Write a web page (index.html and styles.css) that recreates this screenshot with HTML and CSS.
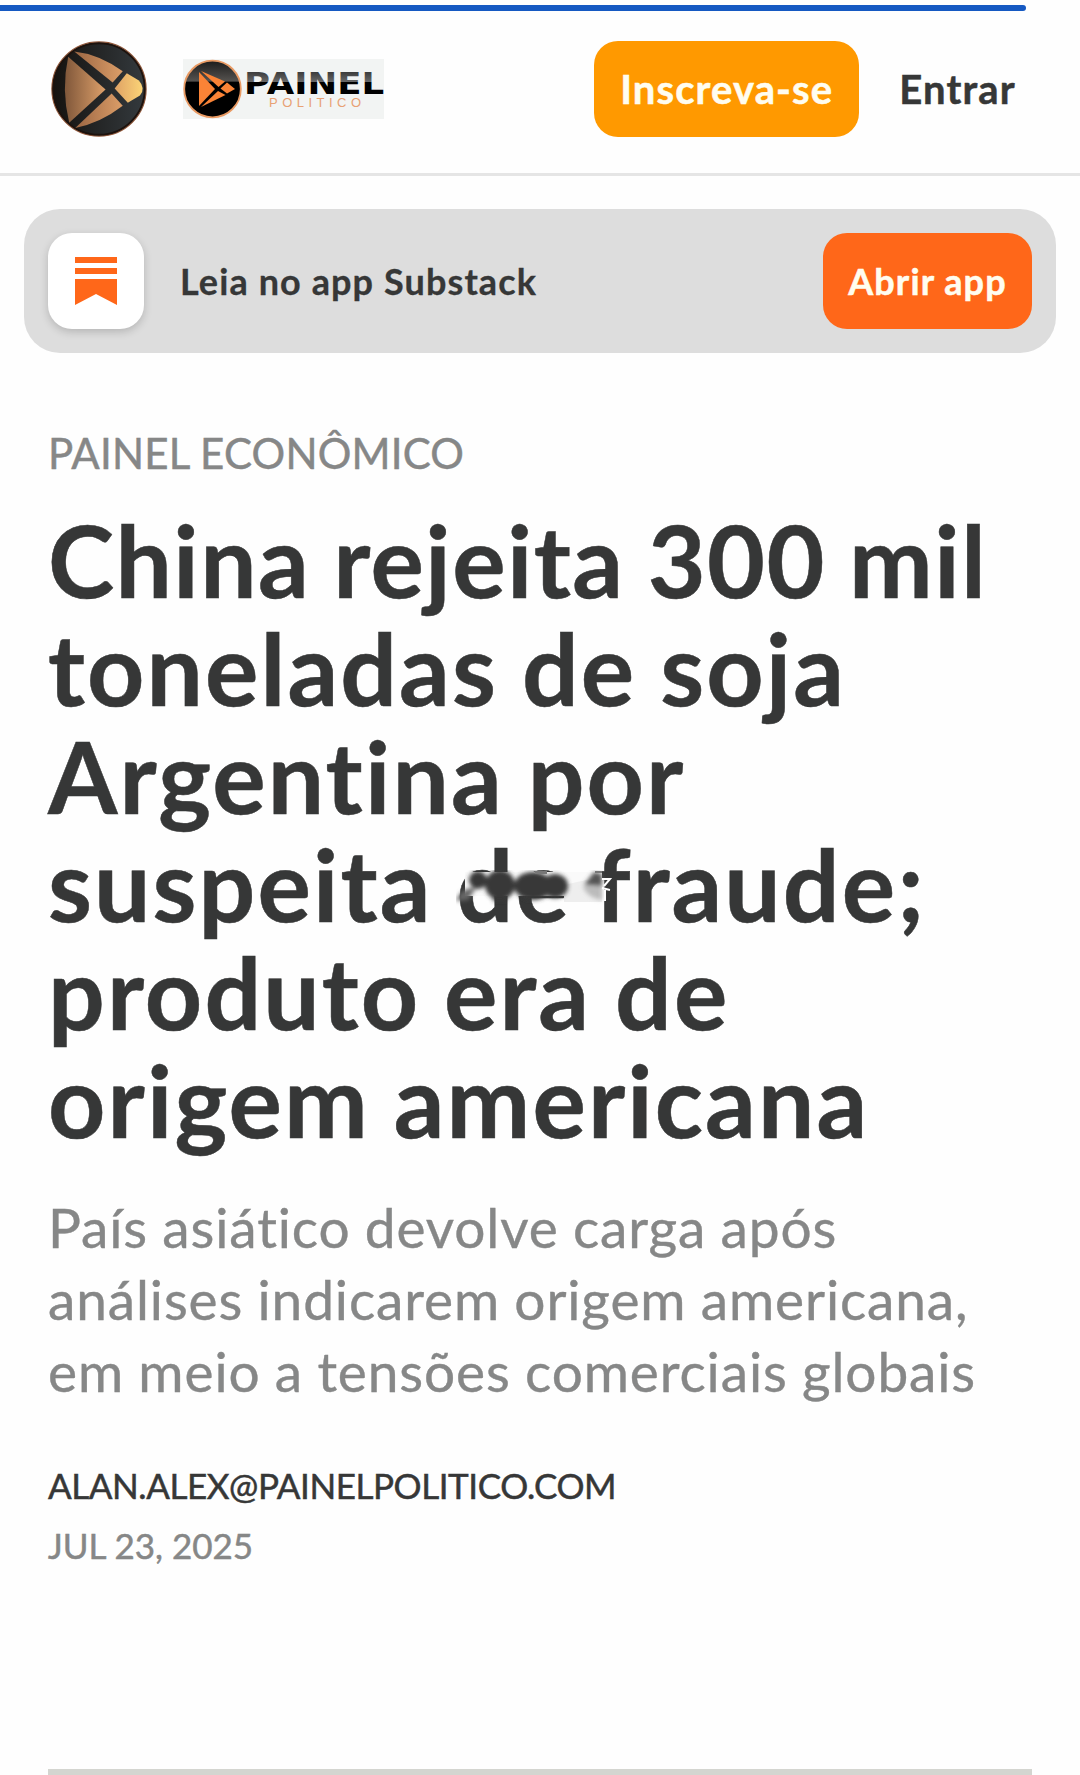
FILE: index.html
```
<!DOCTYPE html>
<html lang="pt-BR">
<head>
    <meta charset="UTF-8">
    <title>Painel Político</title>
    <link rel="stylesheet" href="styles.css">
</head>
<body>
    <div class="progress"></div>

    <header class="header">
        <svg class="avatar" viewBox="0 0 95 95">
            <defs>
                <linearGradient id="bronze" x1="0" y1="0" x2="1" y2="0">
                    <stop offset="0" stop-color="#80573a"/>
                    <stop offset="1" stop-color="#dda06a"/>
                </linearGradient>
                <linearGradient id="wedge" x1="0" y1="0" x2="1" y2="0">
                    <stop offset="0" stop-color="#9c6643"/>
                    <stop offset="1" stop-color="#dc9e68"/>
                </linearGradient>
                <linearGradient id="gold" x1="0" y1="0" x2="1" y2="0">
                    <stop offset="0" stop-color="#dfa265"/>
                    <stop offset="1" stop-color="#fbd477"/>
                </linearGradient>
                <linearGradient id="ball" x1="0" y1="0" x2="1" y2="0">
                    <stop offset="0" stop-color="#15120f"/>
                    <stop offset="1" stop-color="#343a3e"/>
                </linearGradient>
            </defs>
            <circle cx="47.5" cy="47.5" r="46.6" fill="url(#ball)" stroke="#8f573a" stroke-width="1.2"/>
            <circle cx="47.5" cy="47.5" r="45.2" fill="none" stroke="#1d120d" stroke-width="1.8"/>
            <path d="M17 15.500Q10 48 18 81L54 48Z" fill="url(#bronze)"/>
            <path d="M23 10.500Q47 13 71 30L61 41Z" fill="url(#wedge)"/>
            <path d="M60 52L71 64Q49 81 24 86Z" fill="url(#wedge)"/>
            <path d="M75 32L87 39Q94 47 88 54L76 61L63 47Z" fill="url(#gold)"/>
        </svg>

        <svg class="logo" viewBox="0 0 201 60">
            <defs>
                <linearGradient id="gloss" x1="0" y1="0" x2="0" y2="1">
                    <stop offset="0" stop-color="#1c1c1c"/>
                    <stop offset="0.36" stop-color="#55524f"/>
                    <stop offset="0.38" stop-color="#000"/>
                    <stop offset="1" stop-color="#000"/>
                </linearGradient>
                <linearGradient id="word" gradientUnits="userSpaceOnUse" x1="0" y1="11" x2="0" y2="35">
                    <stop offset="0" stop-color="#333"/>
                    <stop offset="0.48" stop-color="#666"/>
                    <stop offset="0.5" stop-color="#000"/>
                    <stop offset="1" stop-color="#000"/>
                </linearGradient>
            </defs>
            <rect width="201" height="60" fill="#f2f4f3"/>
            <circle cx="29.500" cy="30" r="28.300" fill="url(#gloss)" stroke="#e99a63" stroke-width="1.800"/>
            <g fill="#fa8336">
                <path d="M16 13V47L32 30Z"/>
                <path d="M18 12L42 22.500L35.500 28Z"/>
                <path d="M44 23.500L52 30L44 34.500L37.500 29.500Z"/>
                <path d="M35 32L42.500 36L18 48Z"/>
            </g>
            <text class="logo-name" x="61" y="34.500" textLength="140" lengthAdjust="spacingAndGlyphs" fill="url(#word)">PAINEL</text>
            <text class="logo-sub" x="86" y="48" textLength="92">POLITICO</text>
        </svg>

        <button class="subscribe">Inscreva-se</button>
        <a class="signin">Entrar</a>
    </header>

    <div class="banner">
        <div class="app-icon">
            <svg viewBox="0 0 42 48" width="42" height="48">
                <path d="M0 0H42V6H0ZM0 11H42V17H0ZM0 22H42V48L21 37L0 48Z" fill="#ff6719"/>
            </svg>
        </div>
        <span class="banner-text">Leia no app Substack</span>
        <button class="open-app">Abrir app</button>
    </div>

    <main class="post">
        <div class="section">PAINEL ECONÔMICO</div>
        <h1 class="title">
            <span class="line line-tight">China rejeita 300 mil</span>
            <span class="line">toneladas de soja</span>
            <span class="line">Argentina por</span>
            <span class="line">suspeita <span class="smudged">de<svg class="smudge" viewBox="0 0 160 40">
                <defs>
                    <filter id="soft" x="-20%" y="-20%" width="140%" height="140%"><feGaussianBlur stdDeviation="2"/></filter>
                </defs>
                <path d="M9 2H146V32H108V26H9Z" fill="#fafafa"/>
                <path d="M108 15L130 10L146 14V32H108Z" fill="#eee"/>
                <g filter="url(#soft)">
                    <ellipse cx="22" cy="10" rx="9" ry="9" fill="#373838"/>
                    <ellipse cx="44" cy="15" rx="15" ry="15" fill="#373838"/>
                    <path d="M37 14H50V31H37Z" fill="#373838"/>
                    <ellipse cx="77" cy="16" rx="19" ry="14" fill="#373838"/>
                    <ellipse cx="99" cy="16" rx="13" ry="12" fill="#373838"/>
                    <path d="M0 31Q5 17 20 18L12 30Z" fill="#666"/>
                    <path d="M128 15L138 2L146 4V16Z" fill="#555"/>
                    <path d="M127 16H146V30Q130 27 127 16Z" fill="#bbb"/>
                </g>
                <path d="M79 1H91V4H79ZM139 1H146V3H139Z" fill="#777"/>
                <path d="M146 9H154L148 16M146 18L154 20M149 20V31" fill="none" stroke="#fff" stroke-width="2"/>
            </svg></span> fraude;</span>
            <span class="line">produto era de</span>
            <span class="line">origem americana</span>
        </h1>
        <p class="subtitle">País asiático devolve carga após<br>análises indicarem origem americana,<br>em meio a tensões comerciais globais</p>
        <div class="author">ALAN.ALEX@PAINELPOLITICO.COM</div>
        <div class="date">JUL 23, 2025</div>
        <div class="cover"></div>
    </main>
</body>
</html>
```
FILE: styles.css
```
* {
    box-sizing: border-box;
}

body {
    margin: 0;
    padding-top: 5px;
    height: 1775px;
    overflow: hidden;
    background: #fefefe;
    font-family: "Lato", "Open Sans", sans-serif;
    color: #363737;
}

.progress {
    width: 1026px;
    height: 6px;
    border-radius: 0 3px 3px 0;
    background: #1559c2;
}

.header {
    display: flex;
    align-items: flex-start;
    height: 165px;
    padding: 30px 64px 0 51px;
    border-bottom: 3px solid #e5e5e5;
}

.avatar {
    width: 96px;
    height: 96px;
}

.logo {
    width: 201px;
    height: 60px;
    margin: 18px 0 0 36px;
}

.logo-name {
    font: bold 31px "DejaVu Sans", sans-serif;
}

.logo-sub {
    font: 13px "Liberation Sans", sans-serif;
    fill: #e8a173;
}

button {
    border: none;
    padding: 0;
    height: 96px;
    border-radius: 24px;
    font-family: inherit;
    font-weight: 700;
    color: #fffdf0;
    white-space: nowrap;
    -webkit-text-stroke: 0.5px;
}

.subscribe {
    width: 265px;
    margin-left: auto;
    background: #ff9900;
    font-size: 40px;
    letter-spacing: 1.1px;
}

.signin {
    margin-left: 40px;
    font-size: 40px;
    font-weight: 700;
    line-height: 96px;
    letter-spacing: 1.2px;
    -webkit-text-stroke: 0.5px;
}

.banner {
    display: flex;
    align-items: center;
    height: 144px;
    margin: 33px 24px 0;
    padding: 0 24px;
    border-radius: 36px;
    background: #dddddd;
}

.app-icon {
    display: flex;
    align-items: center;
    justify-content: center;
    width: 96px;
    height: 96px;
    border-radius: 24px;
    background: #fff;
    box-shadow: 0 3px 8px rgba(0, 0, 0, 0.18);
}

.banner-text {
    margin-left: 36px;
    font-size: 36px;
    font-weight: 700;
    letter-spacing: 1.1px;
    -webkit-text-stroke: 0.3px;
}

.open-app {
    width: 209px;
    margin-left: auto;
    background: #ff6719;
    font-size: 36px;
    letter-spacing: 1.1px;
}

.post {
    padding: 76px 48px 0;
}

.section {
    font-size: 42px;
    line-height: 48px;
    letter-spacing: 0.2px;
    color: #868787;
    -webkit-text-stroke: 0.5px;
}

.title {
    margin: 28px 0 38px;
    font-size: 100px;
    font-weight: 700;
    line-height: 108px;
    letter-spacing: 2.1px;
    word-spacing: -2.5px;
    -webkit-text-stroke: 0.5px;
}

.line {
    display: block;
    white-space: nowrap;
}

.line-tight {
    letter-spacing: 1.4px;
}

.smudged {
    position: relative;
}

/* smear lying over the word */
.smudge {
    position: absolute;
    left: -1px;
    top: 47px;
    width: 160px;
    height: 40px;
}

.subtitle {
    margin: 0 0 54px;
    font-size: 55px;
    line-height: 72px;
    letter-spacing: 0.87px;
    word-spacing: -0.6px;
    color: #868787;
    white-space: nowrap;
    -webkit-text-stroke: 0.4px;
}

.author,
.date {
    font-size: 35px;
    line-height: 48px;
    -webkit-text-stroke: 0.5px;
}

.author {
    letter-spacing: -0.43px;
}

.date {
    margin-top: 12px;
    color: #868787;
}

.cover {
    height: 20px;
    margin-top: 200px;
    background: #d4d5d0;
}
```
